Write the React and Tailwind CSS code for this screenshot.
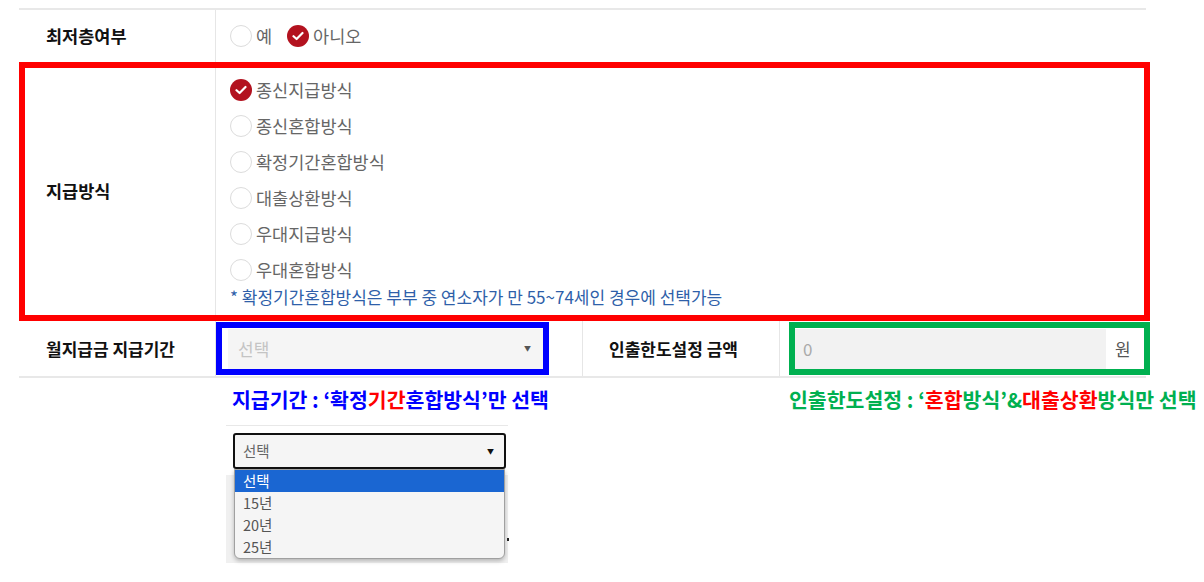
import React from "react";

const KR = { fontFamily: '"Noto Sans CJK KR", "Noto Sans", sans-serif' };

function Radio({ checked, label }) {
  return (
    <label className="flex items-center gap-[4px] text-[17.5px] text-[#666] leading-none">
      {checked ? (
        <span className="w-[22px] h-[22px] rounded-full bg-[#b3121f] flex items-center justify-center">
          <svg width="12" height="10" viewBox="0 0 12 10" fill="none">
            <path d="M1.5 5.2 L4.6 8 L10.5 2" stroke="white" strokeWidth="2.2" strokeLinecap="round" strokeLinejoin="round" />
          </svg>
        </span>
      ) : (
        <span className="w-[22px] h-[22px] rounded-full border border-[#dcdcdc] bg-white" />
      )}
      <span>{label}</span>
    </label>
  );
}

const methods = [
  { label: "종신지급방식", checked: true },
  { label: "종신혼합방식" },
  { label: "확정기간혼합방식" },
  { label: "대출상환방식" },
  { label: "우대지급방식" },
  { label: "우대혼합방식" },
];

export default function App() {
  return (
    <div className="w-[1204px] h-[582px] bg-white overflow-hidden pt-[8px]" style={KR}>
      <div className="ml-[19px] w-[1127px] border-t-2 border-[#e8e8e8]">
        {/* 최저층여부 */}
        <div className="flex h-[52px]">
          <div className="w-[197px] border-r border-[#e6e6e6] pl-[27px] flex items-center font-bold text-[17.5px] text-[#111]">
            최저층여부
          </div>
          <div className="flex items-center pl-[14px] gap-[15px]">
            <Radio label="예" />
            <Radio label="아니오" checked />
          </div>
        </div>

        {/* 지급방식 */}
        <div className="relative flex h-[259px]">
          <div className="w-[197px] border-r border-[#e6e6e6] pl-[27px] flex items-center font-bold text-[17.5px] text-[#111]">
            지급방식
          </div>
          <div className="pl-[14px] pt-[10px]">
            {methods.map((m) => (
              <div key={m.label} className="h-[36px] flex items-center">
                <Radio label={m.label} checked={m.checked} />
              </div>
            ))}
            <div className="h-[18px] flex items-center text-[17px] text-[#2f5fa9] whitespace-nowrap">
              * 확정기간혼합방식은 부부 중 연소자가 만 55~74세인 경우에 선택가능
            </div>
          </div>
          <div className="absolute top-0 left-0 right-[-4px] bottom-0 border-[6px] border-[#ff0000]" />
        </div>

        {/* 월지급금 지급기간 / 인출한도설정 금액 */}
        <div className="flex h-[57px] border-b-2 border-[#e8e8e8]">
          <div className="w-[197px] border-r border-[#e6e6e6] pl-[27px] flex items-center font-bold text-[17px] text-[#111]">
            월지급금 지급기간
          </div>
          <div className="relative w-[367px] border-r border-[#e6e6e6] flex items-center pl-[12px]">
            <div className="w-[315px] h-[40px] bg-[#f5f5f5] flex items-center justify-between pl-[10px] pr-[12px] text-[17px] text-[#c4c4c4]">
              <span>선택</span>
              <span className="text-[7px] text-[#555]">▼</span>
            </div>
            <div className="absolute left-0 top-[1px] w-[333px] h-[53px] border-[6px] border-[#0000ff]" />
          </div>
          <div className="w-[197px] border-r border-[#e6e6e6] pl-[26px] flex items-center font-bold text-[17px] text-[#111]">
            인출한도설정 금액
          </div>
          <div className="relative flex-1 flex items-center pl-[15px]">
            <div className="w-[311px] h-[40px] bg-[#f2f2f2] flex items-center pl-[8px] text-[17px] text-[#aaa]">
              0
            </div>
            <span className="ml-[9px] text-[17px] text-[#555]">원</span>
            <div className="absolute left-[9px] right-[-4px] top-[1px] h-[53px] border-[6px] border-[#00b050]" />
          </div>
        </div>
      </div>

      {/* annotations */}
      <div className="flex mt-[8px] h-[26px] items-center font-bold text-[20.5px] leading-none whitespace-nowrap">
        <div className="ml-[232px] w-[557px] text-[#0000ff]">
          지급기간 : ‘확정<span className="text-[#ff0000]">기간</span>혼합방식’만 선택
        </div>
        <div className="text-[#00b050]">
          인출한도설정 : ‘<span className="text-[#ff0000]">혼합</span>방식’&amp;<span className="text-[#ff0000]">대출상환</span>방식만 선택
        </div>
      </div>

      {/* select dropdown capture */}
      <div className="ml-[226px] mt-[13px] w-[282px] h-[138px] border-t border-[#e8e8e8] relative">
        <div className="h-[49px] bg-white pt-[7px] pl-[7px]">
          <div className="w-[273px] h-[36px] border-2 border-[#111] rounded-[3px] bg-[#f5f5f5] flex items-center justify-between pl-[8px] pr-[10px] text-[14.5px] text-[#666]">
            <span>선택</span>
            <span className="text-[7px] text-[#111]">▼</span>
          </div>
        </div>
        <div className="h-[88px] bg-[#f0f0f0]" />
        <div className="absolute left-[8px] top-[43px] w-[271px] border border-[#a0a0a0] rounded-b-[6px] bg-[#f5f5f5] shadow-[0_2px_4px_rgba(0,0,0,0.25)] overflow-hidden text-[14.5px]">
          <div className="h-[22px] bg-[#1a66d2] text-white flex items-center pl-[8px]">선택</div>
          <div className="h-[22px] text-[#555] flex items-center pl-[8px]">15년</div>
          <div className="h-[22px] text-[#555] flex items-center pl-[8px]">20년</div>
          <div className="h-[22px] text-[#555] flex items-center pl-[8px]">25년</div>
        </div>
        <div className="absolute right-[-1px] top-[112px] w-[2px] h-[3px] bg-[#222]" />
      </div>
    </div>
  );
}
